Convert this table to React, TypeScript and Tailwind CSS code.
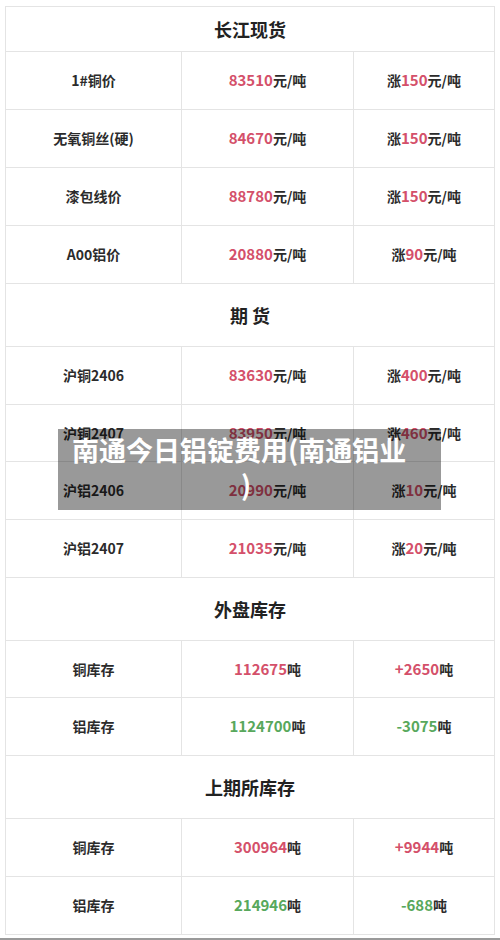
const RED = "text-[#d4506a]";
const GREEN = "text-[#58a85c]";

type Row = { name: string; value: string; unit: string; prefix?: string; change: string; changeUnit: string; tone: "red" | "green"; h: string };

const sections: { title: string; h: string; rows: Row[] }[] = [
  {
    title: "长江现货",
    h: "h-[45px]",
    rows: [
      { name: "1#铜价", value: "83510", unit: "元/吨", prefix: "涨", change: "150", changeUnit: "元/吨", tone: "red", h: "h-[58px]" },
      { name: "无氧铜丝(硬)", value: "84670", unit: "元/吨", prefix: "涨", change: "150", changeUnit: "元/吨", tone: "red", h: "h-[58px]" },
      { name: "漆包线价", value: "88780", unit: "元/吨", prefix: "涨", change: "150", changeUnit: "元/吨", tone: "red", h: "h-[58px]" },
      { name: "A00铝价", value: "20880", unit: "元/吨", prefix: "涨", change: "90", changeUnit: "元/吨", tone: "red", h: "h-[58px]" },
    ],
  },
  {
    title: "期 货",
    h: "h-[63px]",
    rows: [
      { name: "沪铜2406", value: "83630", unit: "元/吨", prefix: "涨", change: "400", changeUnit: "元/吨", tone: "red", h: "h-[58px]" },
      { name: "沪铜2407", value: "83950", unit: "元/吨", prefix: "涨", change: "460", changeUnit: "元/吨", tone: "red", h: "h-[57px]" },
      { name: "沪铝2406", value: "20990", unit: "元/吨", prefix: "涨", change: "10", changeUnit: "元/吨", tone: "red", h: "h-[58px]" },
      { name: "沪铝2407", value: "21035", unit: "元/吨", prefix: "涨", change: "20", changeUnit: "元/吨", tone: "red", h: "h-[58px]" },
    ],
  },
  {
    title: "外盘库存",
    h: "h-[63px]",
    rows: [
      { name: "铜库存", value: "112675", unit: "吨", change: "+2650", changeUnit: "吨", tone: "red", h: "h-[57px]" },
      { name: "铝库存", value: "1124700", unit: "吨", change: "-3075", changeUnit: "吨", tone: "green", h: "h-[58px]" },
    ],
  },
  {
    title: "上期所库存",
    h: "h-[63px]",
    rows: [
      { name: "铜库存", value: "300964", unit: "吨", change: "+9944", changeUnit: "吨", tone: "red", h: "h-[58px]" },
      { name: "铝库存", value: "214946", unit: "吨", change: "-688", changeUnit: "吨", tone: "green", h: "h-[58px]" },
    ],
  },
];

export default function App() {
  return (
    <div className="relative w-[500px] h-[940px] bg-white overflow-hidden font-['Noto_Sans_CJK_SC','Noto_Sans',sans-serif] text-[#2b2b2b]">
      <div className="pt-[6px] pl-[5px] w-[495px]">
        <div className="border-t border-l border-r border-[#e4e4e4]">
          {sections.map((s) => (
            <div key={s.title}>
              <div className={`${s.h} border-b border-[#e4e4e4] flex items-center justify-center text-[18px] font-bold text-[#222]`}>
                <span className="whitespace-pre">{s.title}</span>
              </div>
              {s.rows.map((r) => {
                const tone = r.tone === "red" ? RED : GREEN;
                return (
                  <div key={r.name + r.value} className={`${r.h} grid grid-cols-[176px_172px_1fr] border-b border-[#e4e4e4] text-[14px] font-bold`}>
                    <div className="flex items-center justify-center border-r border-[#e4e4e4]">{r.name}</div>
                    <div className="flex items-center justify-center border-r border-[#e4e4e4]">
                      <span className={`${tone} text-[15px]`}>{r.value}</span>
                      <span>{r.unit}</span>
                    </div>
                    <div className="flex items-center justify-center">
                      {r.prefix && <span>{r.prefix}</span>}
                      <span className={`${tone} text-[15px]`}>{r.change}</span>
                      <span>{r.changeUnit}</span>
                    </div>
                  </div>
                );
              })}
            </div>
          ))}
        </div>
      </div>
      <div className="absolute left-0 right-0 bottom-0 h-[2px] bg-[#9a9a9a]" />

      <div className="absolute left-[58px] top-[429px] w-[383px] h-[81px] bg-black/40 pl-[14px] pt-[3px] text-white text-[27px] font-bold leading-[35px]">
        <div className="whitespace-nowrap">南通今日铝锭费用(南通铝业</div>
        <div className="pl-[169px]">)</div>
      </div>
    </div>
  );
}
